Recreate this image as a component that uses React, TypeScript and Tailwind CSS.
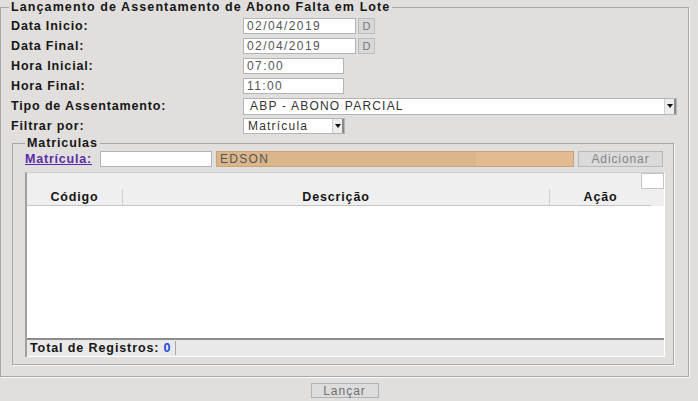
import React from "react"

const rows: { label: string; value?: string; w?: string; date?: boolean }[] = [
    { label: "Data Inicio:", value: "02/04/2019", w: "w-[113px]", date: true },
    { label: "Data Final:", value: "02/04/2019", w: "w-[113px]", date: true },
    { label: "Hora Inicial:", value: "07:00", w: "w-[101px]" },
    { label: "Hora Final:", value: "11:00", w: "w-[101px]" },
]

function Arrow() {
    return (
        <div className="h-full w-[12px] flex items-center justify-center bg-[#ededed] border-l border-[#d0d0d0] border-r-2 border-r-[#8a8a8a]">
            <svg width="6" height="4" viewBox="0 0 6 4">
                <path d="M0 0 L6 0 L3 4 Z" fill="#111" />
            </svg>
        </div>
    )
}

export default function App() {
    return (
        <div className="w-[698px] h-[401px] bg-[#e0dfdd] overflow-hidden font-['Liberation_Sans',Arial,sans-serif] text-[#161616]">
            <fieldset className="w-[689px] h-[377px] border border-[#a8a8a8] shadow-[1px_1px_0_#fafafa]">
                <legend className="ml-[8px] px-[2px] text-[12.5px] leading-[14px] font-bold tracking-[1.1px]">
                    Lançamento de Assentamento de Abono Falta em Lote
                </legend>

                <div className="pt-[2px] pl-[10px]">
                    {rows.map((row) => (
                        <div key={row.label} className="flex items-center h-[20px]">
                            <div className="w-[232px] text-[12.5px] font-bold tracking-[0.85px]">{row.label}</div>
                            <div className={`${row.w} h-[16px] bg-white border border-[#b4b4b4] flex items-center pl-[3px] text-[12px] tracking-[1.4px] text-[#555]`}>
                                {row.value}
                            </div>
                            {row.date && (
                                <div className="ml-[2px] w-[17px] h-[16px] bg-[#d8d8d8] border border-[#bdbdbd] flex items-center justify-center text-[11px] text-[#777]">
                                    D
                                </div>
                            )}
                        </div>
                    ))}
                    <div className="flex items-center h-[20px]">
                        <div className="w-[232px] text-[12.5px] font-bold tracking-[0.85px]">Tipo de Assentamento:</div>
                        <div className="w-[434px] h-[17px] bg-white border border-[#b4b4b4] flex items-center">
                            <div className="flex-1 pl-[6px] text-[12px] tracking-[1.2px] text-[#333]">ABP - ABONO PARCIAL</div>
                            <Arrow />
                        </div>
                    </div>
                    <div className="flex items-center h-[20px]">
                        <div className="w-[232px] text-[12.5px] font-bold tracking-[0.85px]">Filtrar por:</div>
                        <div className="w-[102px] h-[16px] bg-white border border-[#b4b4b4] flex items-center">
                            <div className="flex-1 pl-[4px] text-[12px] tracking-[1.2px] text-[#333]">Matrícula</div>
                            <Arrow />
                        </div>
                    </div>
                </div>

                <fieldset className="ml-[11px] w-[662px] h-[229px] border border-[#a8a8a8] shadow-[1px_1px_0_#fafafa]">
                    <legend className="ml-[12px] px-[2px] text-[12.5px] leading-[14px] font-bold tracking-[0.9px]">
                        Matriculas
                    </legend>

                    <div className="pt-[1px] pl-[12px] flex items-center h-[17px]">
                        <a className="w-[75px] text-[12.5px] font-bold tracking-[0.8px] text-[#5b2ca8] underline">Matrícula:</a>
                        <div className="w-[112px] h-[16px] bg-white border border-[#b4b4b4]" />
                        <div className="ml-[4px] w-[358px] h-[16px] flex border border-[#c9a57c]">
                            <div className="w-[259px] bg-[#dcb68b] flex items-center pl-[3px] text-[12px] tracking-[1.3px] text-[#555]">EDSON</div>
                            <div className="flex-1 bg-[#e2bc90]" />
                        </div>
                        <div className="ml-[4px] w-[85px] h-[16px] bg-[#dadada] border border-[#b9b9b9] flex items-center justify-center text-[12px] tracking-[0.9px] text-[#858585]">
                            Adicionar
                        </div>
                    </div>

                    <div className="mt-[5px] ml-[12px] w-[640px] h-[185px] flex flex-col border-t border-t-[#cfcfcf] border-l-2 border-l-[#a0a0a0] border-r border-r-[#ffffff] bg-[#efefef]">
                        <div className="h-[16px] flex justify-end">
                            <div className="w-[23px] h-[16px] bg-white border border-[#c4c4c4]" />
                        </div>
                        <div className="h-[17px] flex pr-[13px] text-[12.5px] font-bold tracking-[0.85px]">
                            <div className="w-[96px] flex items-center justify-center border-r border-[#cfcfcf] border-b border-b-[#c4c4c4]">Código</div>
                            <div className="w-[427px] flex items-center justify-center border-r border-[#cfcfcf] border-b border-b-[#c4c4c4]">Descrição</div>
                            <div className="flex-1 flex items-center justify-center border-b border-b-[#c4c4c4]">Ação</div>
                        </div>
                        <div className="flex-1 bg-white" />
                        <div className="h-[19px] flex items-center border-t-2 border-t-[#8c8c8c] border-b border-b-[#ffffff] bg-[#e9e9e9] pl-[3px] text-[12.5px] font-bold tracking-[0.9px]">
                            <span>Total de Registros:</span>
                            <span className="ml-[4px] text-[#2345e0]">0</span>
                            <span className="ml-[4px] h-[14px] w-px bg-[#a8a8a8]" />
                        </div>
                    </div>
                </fieldset>
            </fieldset>

            <div className="w-[689px] flex justify-center pt-[6px]">
                <div className="w-[68px] h-[15px] bg-[#dcdcdc] border border-[#b2b2b2] flex items-center justify-center text-[12px] tracking-[1px] text-[#6f6f6f]">
                    Lançar
                </div>
            </div>
        </div>
    )
}
